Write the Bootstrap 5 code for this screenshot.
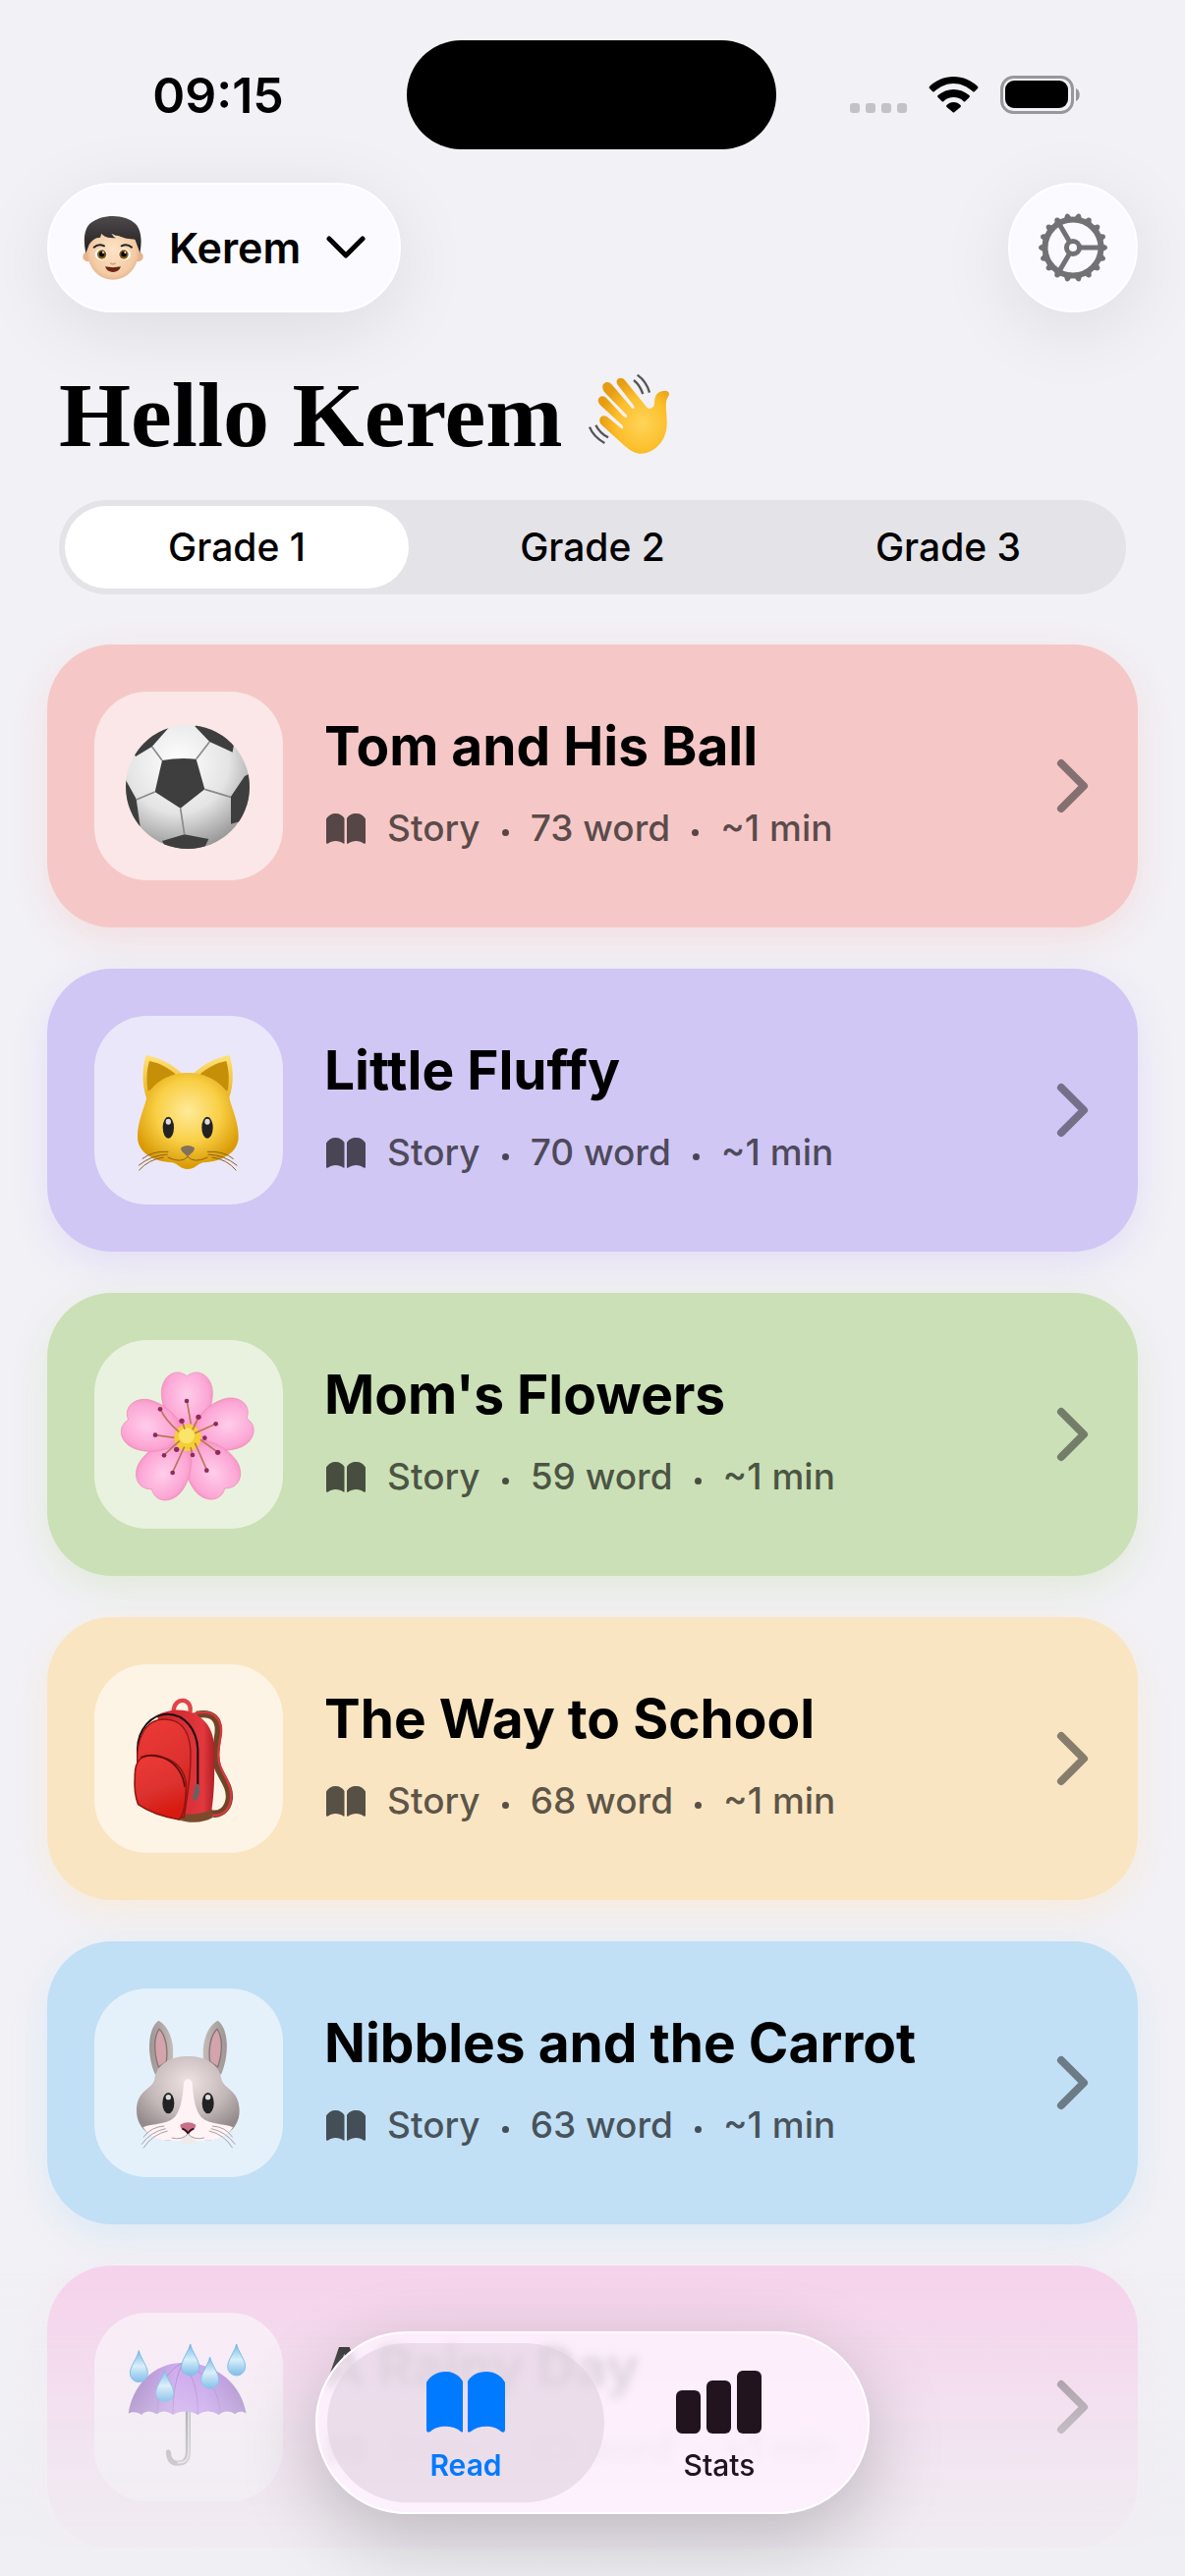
<!DOCTYPE html>
<html lang="en">
<head>
<meta charset="utf-8">
<meta name="viewport" content="width=device-width, initial-scale=1">
<title>Reading</title>
<link href="https://cdn.jsdelivr.net/npm/bootstrap@5.3.0/dist/css/bootstrap.min.css" rel="stylesheet">
<style>
  body { background: #f2f1f6; color: #000; font-family: Inter, "Liberation Sans", sans-serif; }
  svg { display: block; flex: none; }
  .status { padding-top: 41px; }
  .clock { font-size: 50px; line-height: 60px; font-weight: 600; padding-left: 30px; }
  .island { width: 376px; height: 111px; background: #000; border-radius: 56px; }
  .signals { gap: 22px; padding-right: 32px; }
  .topbar { padding: 34px 48px 0; margin-bottom: 48px; }
  .glass { background: #fbfaff; border: 2px solid #fff; height: 132px; border-radius: 66px; box-shadow: 0 16px 80px rgba(0,0,0,.09); color: #000; }
  .profile { padding: 0 34px; gap: 26px; font-size: 43px; line-height: 52px; font-weight: 600; }
  .gear { width: 132px; }
  .hello { font-family: "Liberation Serif", serif; font-weight: 700; font-size: 94px; line-height: 112px; gap: 26px; padding: 0 60px; margin-bottom: 31px; }
  .grades { margin: 0 60px 51px; background: #e4e3e8; border-radius: 48px; height: 96px; }
  .grades label { margin: 6px; border-radius: 42px; font-size: 39px; line-height: 48px; font-weight: 500; cursor: pointer; }
  .grades .btn-check:checked + label { background: #fff; }
  .stories { padding: 0 48px; gap: 42px; }
  .story { padding: 48px; gap: 42px; border-radius: 66px; color: #000; text-decoration: none; background: var(--tone); box-shadow: 0 12px 36px var(--glow); }
  .tile { width: 192px; height: 192px; border-radius: 54px; background: rgba(255,255,255,.57); }
  .story-text { padding-bottom: 4px; }
  .story h2 { font-size: 55px; line-height: 72px; font-weight: 700; margin: 0 0 18px; }
  .meta { font-size: 37px; line-height: 60px; font-weight: 500; gap: 22px; padding-left: 2px; color: rgba(0,0,0,.65); }
  .pip { width: 7px; height: 7px; border-radius: 50%; background: currentColor; margin-top: 8px; }
  .rose { --tone: #f5c8c7; --glow: rgba(245,200,199,.45); }
  .lilac { --tone: #d0c7f4; --glow: rgba(208,199,244,.45); }
  .leaf { --tone: #cbe0b6; --glow: rgba(203,224,182,.45); }
  .sand { --tone: #fae5c2; --glow: rgba(250,229,194,.45); }
  .sky { --tone: #c1dff5; --glow: rgba(193,223,245,.45); }
  .pink { --tone: #f6d3ec; --glow: rgba(246,211,236,.3); }
  .fader { height: 316px; background: linear-gradient(rgba(239,238,243,0), rgba(239,238,243,.3) 30%, rgba(239,238,243,.68) 60%, rgba(239,238,243,.88) 88%); pointer-events: none; }
  .dock { margin-bottom: 63px; padding: 10px; border: 2px solid #fff; border-radius: 93px; background: rgba(255,243,255,.8); backdrop-filter: blur(5px); box-shadow: 0 24px 80px rgba(0,0,0,.22); pointer-events: auto; }
  .tab { width: 282px; padding: 28px 0 20px; gap: 14px; border: 0; border-radius: 81px; background: none; font-size: 30px; line-height: 36px; font-weight: 500; color: #21141f; }
  .tab + .tab { margin-left: -24px; }
  .tab.active { background: rgba(225,208,224,.6); color: #007aff; font-weight: 600; }
</style>
<script src="https://cdn.jsdelivr.net/npm/bootstrap@5.3.0/dist/js/bootstrap.bundle.min.js"></script>
</head>
<body>

<svg width="0" height="0" class="position-absolute" aria-hidden="true">
  <defs>
    <symbol id="book" viewBox="0 0 80 62">
      <path d="M0 11C4 4 11 0 19 0s15 4 18 10v51q-1 1-2 0c-8-7-24-7-31 0q-4 2-4-2zM42 10C45 4 52 0 61 0s15 4 19 11v48q0 4-4 2c-7-7-23-7-31 0q-2 1-3 0z" fill="currentColor"/>
    </symbol>
    <symbol id="chev" viewBox="0 0 36 60"><path d="M6 7l23 23L6 53" fill="none" stroke="currentColor" stroke-width="8" stroke-linecap="round" stroke-linejoin="round"/></symbol>
    <symbol id="drop" viewBox="0 0 60 100"><path d="M30 0C35 25 57 48 57 70a27 27 0 0 1-54 0C3 48 25 25 30 0z" fill="url(#gDrop)" stroke="#4ba6e0" stroke-width="3"/></symbol>
    <radialGradient id="gBall" cx=".42" cy=".3" r=".75"><stop offset="0" stop-color="#fff"/><stop offset=".55" stop-color="#e4e4e4"/><stop offset="1" stop-color="#8e8e8e"/></radialGradient>
    <radialGradient id="gCat" cx=".5" cy=".4" r=".58"><stop offset="0" stop-color="#ffea9a"/><stop offset=".55" stop-color="#f9cf45"/><stop offset="1" stop-color="#d99a05"/></radialGradient>
    <linearGradient id="gEar" x1="0" y1="0" x2="0" y2="1"><stop offset="0" stop-color="#ffe27a"/><stop offset="1" stop-color="#eab320"/></linearGradient>
    <radialGradient id="gPetal" cx=".5" cy=".35" r=".7"><stop offset="0" stop-color="#ffcdea"/><stop offset=".6" stop-color="#fca6d5"/><stop offset="1" stop-color="#f3709f"/></radialGradient>
    <linearGradient id="gBag" x1="0" y1="0" x2=".3" y2="1"><stop offset="0" stop-color="#ee3a36"/><stop offset=".6" stop-color="#dc3230"/><stop offset="1" stop-color="#d81a10"/></linearGradient>
    <linearGradient id="gSide" x1="0" y1="0" x2="1" y2="0"><stop offset="0" stop-color="#c8232a"/><stop offset=".8" stop-color="#e2383d"/><stop offset="1" stop-color="#b01f25"/></linearGradient>
    <radialGradient id="gBun" cx=".5" cy=".3" r=".65"><stop offset="0" stop-color="#efe3e2"/><stop offset=".6" stop-color="#c3b8b8"/><stop offset="1" stop-color="#958a8b"/></radialGradient>
    <linearGradient id="gBunEar" x1="0" y1="0" x2="1" y2="0"><stop offset="0" stop-color="#9e9594"/><stop offset=".5" stop-color="#dcd3d0"/><stop offset="1" stop-color="#9e9594"/></linearGradient>
    <linearGradient id="gDrop" x1="0" y1="0" x2="0" y2="1"><stop offset="0" stop-color="#4ba3e0"/><stop offset=".5" stop-color="#cdf1fd"/><stop offset="1" stop-color="#3e9fe4"/></linearGradient>
    <linearGradient id="gUmb" x1="0" y1="0" x2="1" y2="0"><stop offset="0" stop-color="#8257ad"/><stop offset=".4" stop-color="#c08bee"/><stop offset=".65" stop-color="#b882ea"/><stop offset="1" stop-color="#8a60b8"/></linearGradient>
    <radialGradient id="gHand" cx=".62" cy=".6" r=".6"><stop offset="0" stop-color="#ffd45a"/><stop offset=".6" stop-color="#fcbf2b"/><stop offset="1" stop-color="#e69d13"/></radialGradient>
    <radialGradient id="gFace" cx=".5" cy=".5" r=".6"><stop offset="0" stop-color="#fde3c6"/><stop offset=".7" stop-color="#f3cba4"/><stop offset="1" stop-color="#dda27c"/></radialGradient>
    <linearGradient id="gHair" x1="0" y1="0" x2="0" y2="1"><stop offset="0" stop-color="#4e494a"/><stop offset=".5" stop-color="#383435"/><stop offset="1" stop-color="#211e1f"/></linearGradient>
    <clipPath id="cBall"><circle cx="333" cy="363" r="189"/></clipPath>
  </defs>
</svg>

<div class="status d-flex align-items-center">
  <div class="clock col text-center">09:15</div>
  <div class="island"></div>
  <div class="signals col d-flex justify-content-center align-items-center">
    <svg width="58" height="39" viewBox="0 0 58 39" fill="#c3c2c7"><rect y="28" width="10" height="10" rx="3"/><rect x="16" y="28" width="10" height="10" rx="3"/><rect x="32" y="28" width="10" height="10" rx="3"/><rect x="48" y="28" width="10" height="10" rx="3"/></svg>
    <svg width="51" height="39" viewBox="0 0 51 39"><path d="M25.500 1C35 1 44 5 50 11q1 1 0 2l-3 3q-1 1-2 0C39 11 33 8 25.500 8S12 11 6 16q-1 1-2 0l-3-3q-1-1 0-2C7 5 16 1 25.500 1zM25.500 14c6 0 11 2 16 6q1 1 0 2l-4 4q-1 1-2 0c-3-3-6-4-10-4s-7 1-10 4q-1 1-2 0l-4-4q-1-1 0-2c5-4 10-6 16-6zM25.500 27c3 0 5 1 7 3q1 1 0 2l-6 5q-1 1-2 0l-6-5q-1-1 0-2c2-2 4-3 7-3z"/></svg>
    <svg width="82" height="39" viewBox="0 0 82 39"><rect x="1.500" y="1.500" width="72" height="36" rx="12" fill="none" stroke="#98979b" stroke-width="3"/><rect x="5" y="5" width="64" height="28" rx="9"/><path d="M77 13c5 2 5 11 0 13z" fill="#98979b"/></svg>
  </div>
</div>

<header class="topbar d-flex justify-content-between align-items-center">
  <button type="button" class="glass profile d-flex align-items-center">
    <svg width="62" height="66" viewBox="74 55 186 198" aria-hidden="true">
      <circle cx="90" cy="182" r="15" fill="#e8b48d"/><circle cx="244" cy="182" r="15" fill="#e8b48d"/>
      <path d="M86 130c0-80 162-80 162 0 6 66-24 122-81 122S80 196 86 130z" fill="url(#gFace)"/>
      <path d="M84 171C76 132 78 98 98 80c34-30 108-30 138 2 18 18 20 54 13 89-4-14-10-30-15-42-16 0-36-4-48-10q-12-2-24-8 6 10 14 14c-28 0-38-6-44-14l-4 12c-16 0-26 10-34 22z" fill="url(#gHair)"/>
      <path d="M109 153q14-12 31-4M193 149q17-8 31 4" stroke="#222" stroke-width="6" fill="none" stroke-linecap="round"/>
      <ellipse cx="131" cy="175" rx="19" ry="17" fill="#fff"/><ellipse cx="202" cy="175" rx="19" ry="17" fill="#fff"/>
      <circle cx="133" cy="175" r="14" fill="#8a5a12"/><circle cx="200" cy="175" r="14" fill="#8a5a12"/><circle cx="133" cy="174" r="8"/><circle cx="200" cy="174" r="8"/><circle cx="137" cy="169" r="3" fill="#fff"/><circle cx="204" cy="169" r="3" fill="#fff"/>
      <path d="M159 201q8 7 16 0" stroke="#dca078" stroke-width="5" fill="none"/><path d="M143 212q24 5 48 0-6 17-24 17t-24-17z" fill="#6b2416"/>
    </svg>
    <span>Kerem</span>
    <svg width="40" height="24" viewBox="0 0 40 24" aria-hidden="true"><path d="M3 3l17 17L37 3" fill="none" stroke="#000" stroke-width="5" stroke-linecap="round" stroke-linejoin="round"/></svg>
  </button>
  <button type="button" class="glass gear p-0 d-flex align-items-center justify-content-center" aria-label="Settings">
    <svg width="72" height="72" viewBox="-36 -36 72 72" fill="none" stroke="#727274" aria-hidden="true">
      <defs><path id="tooth" d="M28-5L34-2Q36 0 34 2L28 5z" fill="#727274" stroke="none"/><g id="teeth"><use href="#tooth"/><use href="#tooth" transform="rotate(20)"/><use href="#tooth" transform="rotate(40)"/></g></defs>
      <use href="#teeth"/><use href="#teeth" transform="rotate(60)"/><use href="#teeth" transform="rotate(120)"/><use href="#teeth" transform="rotate(180)"/><use href="#teeth" transform="rotate(240)"/><use href="#teeth" transform="rotate(300)"/>
      <circle r="28.500" stroke-width="6"/><circle r="6.500" stroke-width="5"/>
      <path d="M8 0H27M-4-7L-14-24M-4 7L-14 24" stroke-width="5"/>
    </svg>
  </button>
</header>

<main>
  <h1 class="hello d-flex align-items-center">Hello Kerem
    <svg width="84" height="84" viewBox="53 33 252 252" aria-hidden="true">
      <path d="M205 38q28 20 37 54M194 54q18 14 28 42M59 197q12 30 46 49M78 191q12 24 38 38" fill="none" stroke="#555" stroke-width="7"/>
      <path d="M99 76c-2-16 18-22 27-10l62 73c5 4 10 1 7-6l-50-65c-12-16 10-30 22-14l66 82c10 10 22 2 24-10 0-18 4-34 22-38 20-6 28 6 20 16-12 18-4 40-4 82 0 60-46 95-84 92-20-2-34-14-50-28l-66-60c-14-16 2-34 18-24l42 34c6 4 9-1 5-7L90 128c-14-18 6-34 20-20l54 58c6 5 12 1 8-6l-68-70c-3-4-5-9-5-14z" fill="url(#gHand)"/>
    </svg>
  </h1>

  <div class="grades d-flex" role="group" aria-label="Grade">
    <input type="radio" class="btn-check" name="grade" id="g1" checked><label for="g1" class="col d-flex align-items-center justify-content-center">Grade 1</label>
    <input type="radio" class="btn-check" name="grade" id="g2"><label for="g2" class="col d-flex align-items-center justify-content-center">Grade 2</label>
    <input type="radio" class="btn-check" name="grade" id="g3"><label for="g3" class="col d-flex align-items-center justify-content-center">Grade 3</label>
  </div>

  <div class="stories d-flex flex-column">
    <a href="#" class="story rose d-flex align-items-center">
      <svg class="tile" viewBox="48 72 576 576" aria-hidden="true">
        <circle cx="333" cy="363" r="189" fill="url(#gBall)"/>
        <g clip-path="url(#cBall)" fill="#3e3e3e">
          <path d="M255 282q52-10 104-4l26 92-74 58-78-50z"/>
          <path d="M277 180l-53 60-50 30-34-60 100-60zM355 178l45 47 70 32 10-60-90-50zM507 330l-42 62v84l70-20v-140zM143 340l33 60 12 84-60-30zM255 528l68-20 74 14-24 50H280z"/>
        </g>
        <path d="M255 282l-31-42M359 278l41-53M385 370l80 24M311 428l12 80M233 378l-57 24" stroke="#8a8a8a" stroke-width="5" fill="none"/>
      </svg>
      <div class="story-text flex-grow-1">
        <h2>Tom and His Ball</h2>
        <div class="meta d-flex align-items-center"><svg width="40" height="31"><use href="#book"/></svg><span>Story</span><i class="pip"></i><span>73 word</span><i class="pip"></i><span>~1 min</span></div>
      </div>
      <svg width="36" height="60" color="#857071"><use href="#chev"/></svg>
    </a>
    <a href="#" class="story lilac d-flex align-items-center">
      <svg class="tile" viewBox="48 72 576 576" aria-hidden="true">
        <path d="M208 325c-16-45-14-92-2-133 42 8 80 28 110 56zM459 325c16-45 14-92 2-133-42 8-80 28-110 56z" fill="url(#gEar)"/>
        <path d="M212 302c-6-34-4-64 4-92 34 6 58 22 80 40zM455 302c6-34 4-64-4-92-34 6-58 22-80 40z" fill="#c58f08"/>
        <path d="M333 246c-58 0-106 30-124 72-8 36-29 76-29 122 0 52 50 76 106 80 18 4 24 20 47 20s29-16 47-20c56-4 108-28 108-80 0-46-21-86-29-122-18-42-68-72-126-72z" fill="url(#gCat)"/>
        <ellipse cx="274" cy="413" rx="17" ry="33" fill="#222"/><ellipse cx="393" cy="413" rx="17" ry="33" fill="#222"/><ellipse cx="274" cy="395" rx="8" ry="9" fill="#ddd"/><ellipse cx="393" cy="395" rx="8" ry="9" fill="#ddd"/>
        <path d="M313 474q20-12 40 0c4 10-12 20-20 28-8-8-24-18-20-28z" fill="#83715a"/>
        <path d="M272 504q42 20 61-2 19 22 61 2M274 487q-50-3-80 22M272 495q-50 2-89 34M260 504q-46 6-76 40M393 487q50-3 80 22M395 495q50 2 89 34M407 504q46 6 74 40" stroke="#8a6220" stroke-width="3" fill="none"/>
      </svg>
      <div class="story-text flex-grow-1">
        <h2>Little Fluffy</h2>
        <div class="meta d-flex align-items-center"><svg width="40" height="31"><use href="#book"/></svg><span>Story</span><i class="pip"></i><span>70 word</span><i class="pip"></i><span>~1 min</span></div>
      </div>
      <svg width="36" height="60" color="#757089"><use href="#chev"/></svg>
    </a>
    <a href="#" class="story leaf d-flex align-items-center">
      <svg class="tile" viewBox="48 72 576 576" aria-hidden="true">
        <defs><path id="petal" d="M333 372c-44-34-80-80-80-140 0-46 40-80 78-50 36-30 78 4 78 50 0 60-32 106-76 140z" fill="url(#gPetal)" stroke="#e98bb5" stroke-width="2"/></defs>
        <use href="#petal"/><use href="#petal" transform="rotate(72 333 372)"/><use href="#petal" transform="rotate(144 333 372)"/><use href="#petal" transform="rotate(216 333 372)"/><use href="#petal" transform="rotate(288 333 372)"/>
        <circle cx="333" cy="370" r="41" fill="#f4cf35"/><circle cx="330" cy="364" r="24" fill="#fae46a"/>
        <path d="M343 328l-12-68M306 352q-40-34-56-68M355 356l64-28M292 370l-58-8M308 380l-46 42M323 398l-36 78M355 386l36 82M372 376l52 38M348 346l18-38M324 344l-8-24M342 400l6 22" stroke="#bd7558" stroke-width="5" fill="none"/>
        <g fill="#8f2a5c"><circle cx="330" cy="258" r="7"/><circle cx="249" cy="283" r="7"/><circle cx="419" cy="328" r="7"/><circle cx="234" cy="362" r="7"/><circle cx="261" cy="424" r="7"/><circle cx="287" cy="477" r="7"/><circle cx="391" cy="470" r="7"/><circle cx="425" cy="415" r="8"/><circle cx="366" cy="307" r="8"/><circle cx="315" cy="319" r="8"/><circle cx="348" cy="423" r="7"/><circle cx="385" cy="371" r="7"/><circle cx="299" cy="406" r="8"/></g>
      </svg>
      <div class="story-text flex-grow-1">
        <h2>Mom's Flowers</h2>
        <div class="meta d-flex align-items-center"><svg width="40" height="31"><use href="#book"/></svg><span>Story</span><i class="pip"></i><span>59 word</span><i class="pip"></i><span>~1 min</span></div>
      </div>
      <svg width="36" height="60" color="#737d6a"><use href="#chev"/></svg>
    </a>
    <a href="#" class="story sand d-flex align-items-center">
      <svg class="tile" viewBox="48 72 576 576" aria-hidden="true">
        <path d="M360 226c50-10 72 14 66 60-6 40-12 70-2 98 12 34 40 60 36 98-4 36-30 50-54 46" fill="none" stroke="#6f4526" stroke-width="22"/>
        <path d="M350 224c60-18 92 14 84 66-6 36-12 66-2 92 12 32 38 62 33 102-4 34-28 52-58 49" fill="none" stroke="#dc3540" stroke-width="7"/>
        <path d="M290 216c0-46 60-44 50 4" fill="none" stroke="#e2434b" stroke-width="13"/>
        <path d="M300 545v-30h108v26c-30 18-76 16-108 4z" fill="#7a4a2c"/>
        <path d="M240 228c70-40 174-8 174 100 2 80 0 140-8 190-36 12-70 14-104 10z" fill="url(#gSide)"/>
        <path d="M180 372v-40c0-60 42-108 90-108 56 0 92 50 94 110v108" fill="none" stroke="#1c0c0c" stroke-width="6"/>
        <path d="M180 380c-6-76 20-140 82-140 60 0 80 50 80 110 0 80-12 130-20 190l-120-40z" fill="url(#gBag)" stroke="#8f1613" stroke-width="4"/>
        <path d="M172 410c0-44 20-64 60-58 60 6 98 40 96 100-2 50-6 80-22 94-46-8-90-22-124-46-10-24-12-60-10-90z" fill="url(#gBag)" stroke="#8f1613" stroke-width="5"/>
        <path d="M190 356c56-20 124 14 134 90" fill="none" stroke="#5f0f0d" stroke-width="5"/>
        <path d="M357 438h10l2 26-10 24-11-4z" fill="#606468"/>
      </svg>
      <div class="story-text flex-grow-1">
        <h2>The Way to School</h2>
        <div class="meta d-flex align-items-center"><svg width="40" height="31"><use href="#book"/></svg><span>Story</span><i class="pip"></i><span>68 word</span><i class="pip"></i><span>~1 min</span></div>
      </div>
      <svg width="36" height="60" color="#877d6d"><use href="#chev"/></svg>
    </a>
    <a href="#" class="story sky d-flex align-items-center">
      <svg class="tile" viewBox="48 72 576 576" aria-hidden="true">
        <path d="M234 335c-26-60-24-140 10-165 34 18 52 72 42 130zM435 335c26-60 24-140-10-165-34 18-52 72-42 130z" fill="url(#gBunEar)"/>
        <path d="M244 312c-16-50-14-94 2-116 18 16 28 56 22 100zM425 312c16-50 14-94-2-116-18 16-28 56-22 100z" fill="#d3a4ab" stroke="#857475" stroke-width="4"/>
        <path d="M334 279c-54 0-96 24-102 70-6 32-55 32-55 96 0 62 56 92 110 92h94c54 0 110-30 110-92 0-64-47-64-55-96-6-46-48-70-102-70z" fill="url(#gBun)"/>
        <path d="M321 362c2-18 24-18 26 0 4 52 12 98 40 112 34 16 60 10 84 22-24 38-62 41-96 41h-82c-34 0-72-3-96-41 24-12 50-6 84-22 28-14 36-60 40-112z" fill="#fff3f6"/>
        <ellipse cx="274" cy="422" rx="18" ry="32" fill="#222"/><ellipse cx="395" cy="422" rx="18" ry="32" fill="#222"/><ellipse cx="274" cy="404" rx="8" ry="8" fill="#ddd"/><ellipse cx="395" cy="404" rx="8" ry="8" fill="#ddd"/>
        <path d="M310 488q24-14 48 0c0 14-14 18-24 28-10-10-24-14-24-28z" fill="#c96f87"/><path d="M316 500q14 4 18 16 4-12 18-16" stroke="#2c1018" stroke-width="5" fill="none"/>
        <path d="M313 528l21-12 22 12v21h-43z" fill="#eeecea"/>
        <path d="M334 516q-18 20-50 12M334 516q18 20 50 12M262 492q-40 2-64 34M266 500q-44 8-74 48M272 507q-46 10-74 52M408 492q40 2 62 34M404 500q44 8 74 48M398 507q46 10 72 52" stroke="#a99fa2" stroke-width="3" fill="none"/>
      </svg>
      <div class="story-text flex-grow-1">
        <h2>Nibbles and the Carrot</h2>
        <div class="meta d-flex align-items-center"><svg width="40" height="31"><use href="#book"/></svg><span>Story</span><i class="pip"></i><span>63 word</span><i class="pip"></i><span>~1 min</span></div>
      </div>
      <svg width="36" height="60" color="#6d7b86"><use href="#chev"/></svg>
    </a>
    <a href="#" class="story pink d-flex align-items-center">
      <svg class="tile" viewBox="48 72 576 576" aria-hidden="true">
        <path d="M334 368v130q0 34-32 34-26 0-28-34" fill="none" stroke="#77777c" stroke-width="15" stroke-linecap="round"/><path d="M336 368v130q0 34-34 32" fill="none" stroke="#d5d5da" stroke-width="5"/>
        <path d="M152 380c12-84 76-155 166-155 110 0 180 71 194 155-12-8-26-8-34 2-14-12-38-12-50 2-22-14-44-14-64 0-22-14-54-14-76 0-18-14-36-14-50-2-16-12-34-12-46 2-12-10-28-10-40-4z" fill="url(#gUmb)"/>
        <path d="M318 225c-60 30-76 90-78 155M318 225c-20 40-30 90-30 155M318 225c34 40 46 90 46 157M318 225c80 34 112 90 114 155" stroke="#8f68b8" stroke-width="3" fill="none"/>
        <use href="#drop" x="154" y="187" width="60" height="100"/><use href="#drop" x="311" y="167" width="60" height="100"/><use href="#drop" x="371" y="207" width="60" height="100"/><use href="#drop" x="452" y="167" width="60" height="100"/><use href="#drop" x="233" y="247" width="60" height="100"/>
      </svg>
      <div class="story-text flex-grow-1">
        <h2>A Rainy Day</h2>
        <div class="meta d-flex align-items-center"><svg width="40" height="31"><use href="#book"/></svg><span>Story</span><i class="pip"></i><span>63 word</span><i class="pip"></i><span>~1 min</span></div>
      </div>
      <svg width="36" height="60" color="#85747f"><use href="#chev"/></svg>
    </a>
  </div>
</main>

<nav class="fader fixed-bottom d-flex justify-content-center align-items-end" aria-label="Main">
  <div class="dock d-flex">
    <button type="button" class="tab active d-flex flex-column align-items-center"><svg width="80" height="64"><use href="#book"/></svg>Read</button>
    <button type="button" class="tab d-flex flex-column align-items-center">
      <svg width="88" height="64" viewBox="0 0 88 64" fill="currentColor" aria-hidden="true"><rect y="20" width="25" height="44" rx="6"/><rect x="31" y="10" width="25" height="54" rx="6"/><rect x="62" width="25" height="64" rx="6"/></svg>Stats</button>
  </div>
</nav>
</body>
</html>
